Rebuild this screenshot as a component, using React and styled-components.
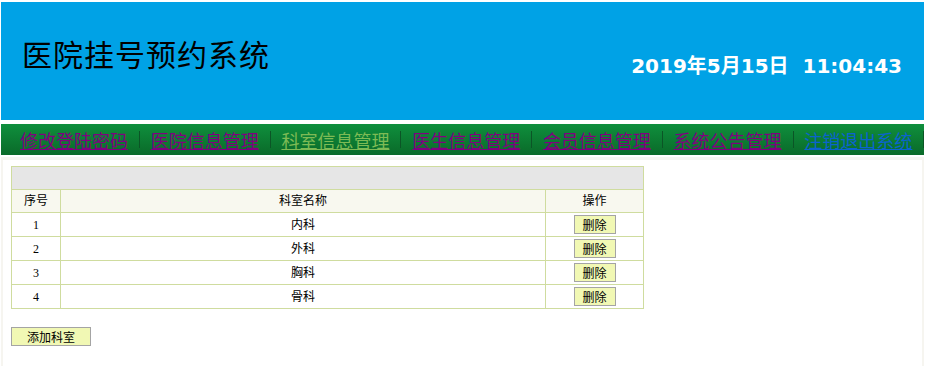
import React from "react";
import styled, { createGlobalStyle } from "styled-components";

const GlobalStyle = createGlobalStyle`
  html, body {
    margin: 0;
    padding: 0;
    background: #ffffff;
  }
  body {
    font-family: "Noto Sans CJK SC", sans-serif;
  }
`;

const navItems = [
  { text: "修改登陆密码", tone: "visited" },
  { text: "医院信息管理", tone: "visited" },
  { text: "科室信息管理", tone: "active" },
  { text: "医生信息管理", tone: "visited" },
  { text: "会员信息管理", tone: "visited" },
  { text: "系统公告管理", tone: "visited" },
  { text: "注销退出系统", tone: "link" },
];

const departments = ["内科", "外科", "胸科", "骨科"];

const toneColors = {
  visited: "#800080",
  active: "#7dbb55",
  link: "#0a63cf",
};

class App extends React.Component {
  handleClick = e => {
    e.preventDefault();
  };
  render() {
    return (
      <>
        <GlobalStyle />
        <Page>
          <Header>
            <Title>医院挂号预约系统</Title>
            <Clock>2019年5月15日&nbsp;&nbsp;11:04:43</Clock>
          </Header>
          <Nav>
            {navItems.map(item => (
              <React.Fragment key={item.text}>
                <NavLink href="#" tone={item.tone} onClick={this.handleClick}>
                  {item.text}
                </NavLink>
                <Separator />
              </React.Fragment>
            ))}
          </Nav>
          <Content>
            <Panel>
              <Table>
                <colgroup>
                  <col style={{ width: 49 }} />
                  <col style={{ width: 485 }} />
                  <col style={{ width: 98 }} />
                </colgroup>
                <tbody>
                  <TitleRow>
                    <td colSpan={3} />
                  </TitleRow>
                  <HeadRow>
                    <Cell>序号</Cell>
                    <Cell>科室名称</Cell>
                    <Cell>操作</Cell>
                  </HeadRow>
                  {departments.map((name, i) => (
                    <DataRow key={name}>
                      <Cell>{i + 1}</Cell>
                      <Cell>{name}</Cell>
                      <Cell>
                        <ActionButton>删除</ActionButton>
                      </Cell>
                    </DataRow>
                  ))}
                </tbody>
              </Table>
              <AddButton>添加科室</AddButton>
            </Panel>
          </Content>
        </Page>
      </>
    );
  }
}

export default App;

const Page = styled.div`
  padding: 2px 1px 0 1px;
  display: flex;
  flex-direction: column;
`;

const Header = styled.div`
  height: 118px;
  background: #00a2e6;
  display: flex;
  justify-content: space-between;
  align-items: flex-start;
  padding: 0 22px 0 21px;
`;

const Title = styled.h1`
  margin: 35px 0 0;
  font-family: "Noto Sans CJK SC", sans-serif;
  font-weight: 400;
  font-size: 30px;
  line-height: 32px;
  letter-spacing: 1px;
  color: #000;
`;

const Clock = styled.div`
  margin-top: 53px;
  font-family: "DejaVu Sans", "Noto Sans CJK SC", sans-serif;
  font-weight: 700;
  font-size: 20px;
  line-height: 22px;
  color: #fff;
`;

const Nav = styled.div`
  margin-top: 4px;
  height: 31px;
  background: linear-gradient(#0f8f3d, #0a6a29);
  display: flex;
  align-items: center;
  padding-left: 8px;
`;

const NavLink = styled.a`
  margin: 0 11px;
  font-family: "Noto Sans CJK SC", sans-serif;
  font-size: 18px;
  line-height: 20px;
  color: ${p => toneColors[p.tone]};
  text-decoration: underline;
  white-space: nowrap;
`;

const Separator = styled.span`
  width: 1px;
  height: 17px;
  background: #0b5526;
`;

const Content = styled.div`
  margin-top: 2px;
  background: #f6f5f0;
  padding: 3px 2px 0 2px;
`;

const Panel = styled.div`
  background: #fff;
  padding: 6px 8px 20px;
  min-height: 186px;
`;

const Table = styled.table`
  width: 633px;
  border-collapse: collapse;
  table-layout: fixed;
  font-family: "Liberation Serif", "Noto Sans CJK SC", serif;
  font-size: 12px;
  color: #000;
  td {
    border: 1px solid #cfdc9f;
    padding: 0;
    text-align: center;
  }
`;

const TitleRow = styled.tr`
  height: 23px;
  td {
    background: #e6e6e6;
  }
`;

const HeadRow = styled.tr`
  height: 23px;
  td {
    background: #f8f8ef;
  }
`;

const DataRow = styled.tr`
  height: 24px;
`;

const Cell = styled.td`
  line-height: 14px;
`;

const ButtonBase = styled.button`
  height: 19px;
  padding: 0;
  background: #f1f8b4;
  border: 1px solid #a4a4a4;
  font-family: "Noto Sans CJK SC", sans-serif;
  font-size: 12px;
  line-height: 15px;
  color: #000;
  cursor: pointer;
`;

const ActionButton = styled(ButtonBase)`
  width: 42px;
  display: block;
  margin: 0 auto;
`;

const AddButton = styled(ButtonBase)`
  width: 80px;
  display: block;
  margin-top: 18px;
`;
